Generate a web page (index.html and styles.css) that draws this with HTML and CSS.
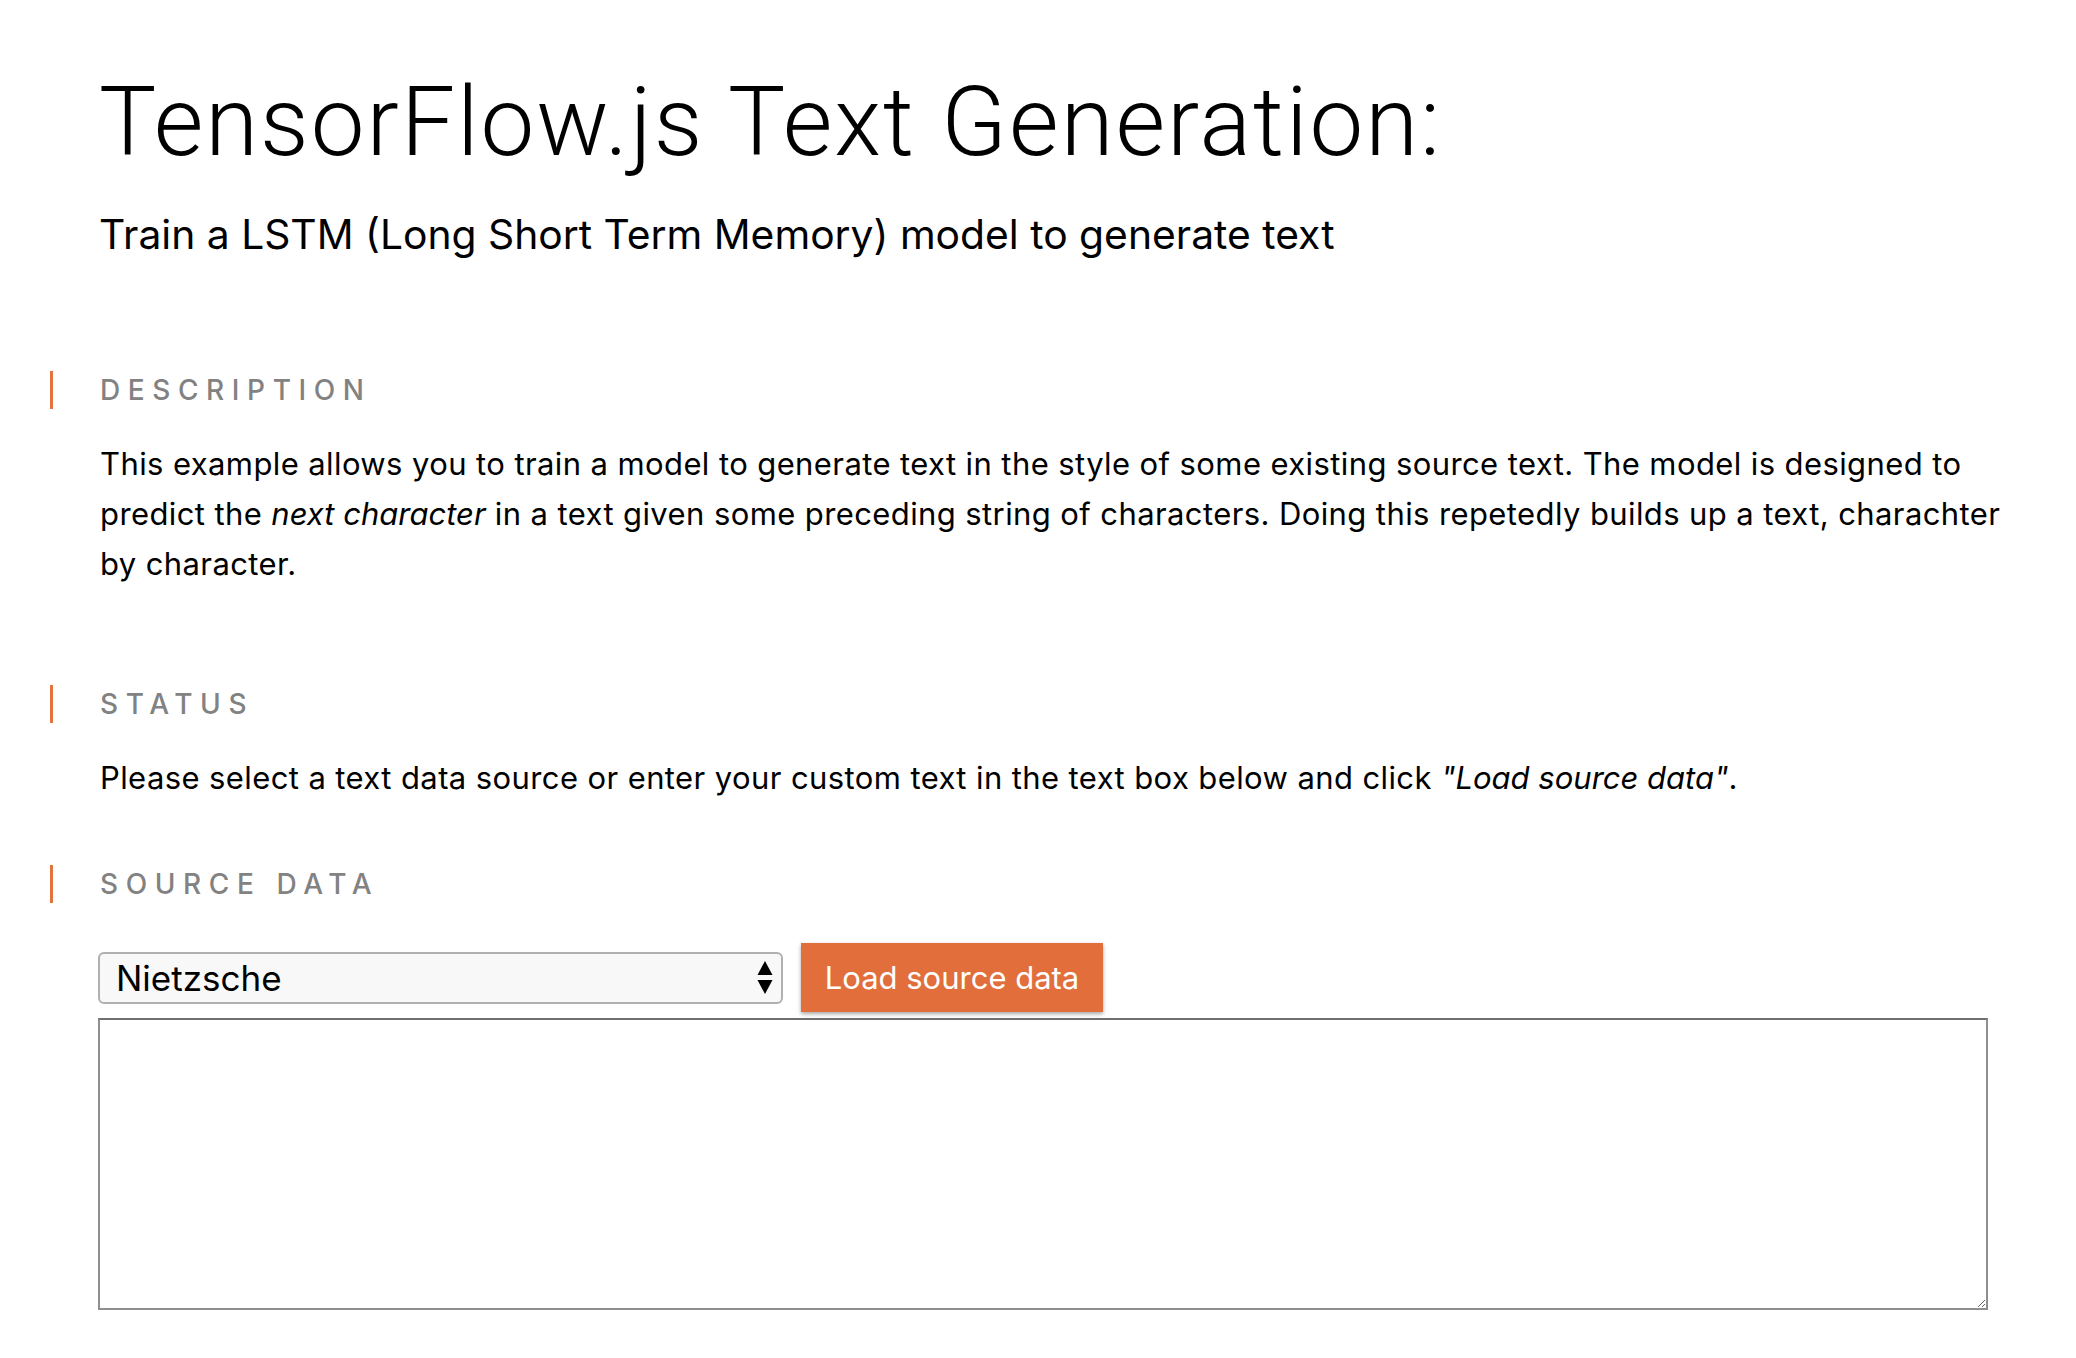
FILE: index.html
```html
<!DOCTYPE html>
<html>
<head>
<meta charset="utf-8">
<link rel="stylesheet" href="styles.css">
<title>TensorFlow.js Text Generation</title>
</head>
<body>
<div class="page">
  <header class="intro">
    <h1 class="title">TensorFlow.js Text Generation:</h1>
    <p class="subtitle">Train a LSTM (Long Short Term Memory) model to generate text</p>
  </header>

  <section class="section">
    <h2 class="section-head">Description</h2>
    <p class="body-text">This example allows you to train a model to generate text in the style of some existing source text. The model is designed to predict the <em>next character</em> in a text given some preceding string of characters. Doing this repetedly builds up a text, charachter by character.</p>
  </section>

  <section class="section section-status">
    <h2 class="section-head">Status</h2>
    <p class="body-text">Please select a text data source or enter your custom text in the text box below and click <em>"Load source data"</em>.</p>
  </section>

  <section class="section section-source">
    <h2 class="section-head">Source Data</h2>
    <div class="controls">
      <div class="select-wrap">
        <select class="source-select">
          <option>Nietzsche</option>
        </select>
        <svg class="select-arrows" width="16" height="34" viewBox="0 0 16 34"><path d="M8 0 L15.5 14 L0.5 14 Z" fill="#000"/><path d="M0.5 19 L15.5 19 L8 33 Z" fill="#000"/></svg>
      </div>
      <button class="load-btn">Load source data</button>
    </div>
    <textarea class="source-text"></textarea>
  </section>
</div>
</body>
</html>
```
FILE: styles.css
```css
html, body {
  margin: 0;
  padding: 0;
  background: #ffffff;
}

body {
  font-family: "Inter", "Roboto", "Liberation Sans", sans-serif;
  color: #000;
}

.page {
  padding: 0 40px 0 50px;
}

.intro {
  padding-left: 49px;
  padding-top: 62px;
}

.title {
  font-family: "Roboto", "Liberation Sans", sans-serif;
  font-weight: 300;
  font-size: 96px;
  line-height: 120px;
  margin: 0;
  letter-spacing: 2px;
}

.subtitle {
  font-size: 40.8px;
  line-height: 50px;
  margin: 27px 0 0 0;
  font-weight: 400;
}

.section {
  margin-top: 112px;
}

.section-status {
  margin-top: 96px;
}

.section-source {
  margin-top: 62px;
}

.section-head {
  border-left: 3px solid #e2733d;
  padding-left: 47px;
  margin: 0;
  font-size: 28px;
  line-height: 38px;
  font-weight: 500;
  letter-spacing: 7.6px;
  text-transform: uppercase;
  color: #828282;
}

.body-text {
  margin: 30px 0 0 50px;
  font-size: 31px;
  line-height: 50px;
  letter-spacing: 0.4px;
}

.body-text em {
  font-style: italic;
  letter-spacing: 0;
}

.controls {
  display: flex;
  align-items: center;
  gap: 18px;
  margin: 40px 0 0 48px;
}

.select-wrap {
  position: relative;
  width: 685px;
  height: 52px;
}

.source-select {
  appearance: none;
  -webkit-appearance: none;
  width: 100%;
  height: 100%;
  box-sizing: border-box;
  border: 2px solid #b0b0b0;
  border-radius: 6px;
  background: #f8f8f8;
  font-family: "Inter", "Roboto", sans-serif;
  font-size: 35px;
  padding: 0 0 0 16px;
  color: #000;
}

.select-arrows {
  position: absolute;
  right: 10px;
  top: 9px;
}

.load-btn {
  width: 302px;
  height: 69px;
  border: none;
  background: #e16e3b;
  color: #fff;
  font-family: "Inter", "Roboto", sans-serif;
  font-size: 31px;
  box-shadow: 0 2px 4px rgba(0,0,0,0.35);
  padding: 0;
}

.source-text {
  display: block;
  box-sizing: border-box;
  width: 1890px;
  height: 292px;
  margin: 6px 0 0 48px;
  border: 2px solid #8f8f8f;
  border-top-color: #707070;
  background: #fff;
  resize: both;
}
```
